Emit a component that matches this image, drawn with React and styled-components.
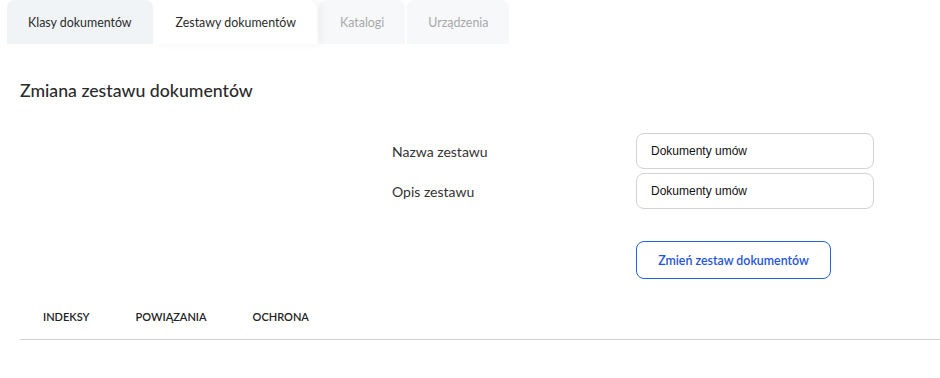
import React, { useState } from 'react'
import styled, { createGlobalStyle } from 'styled-components'

const GlobalStyle = createGlobalStyle`
  body {
    margin: 0;
    background: #fff;
    font-family: Lato, "Noto Sans", sans-serif;
    color: #2b2b2b;
  }
`

const Page = styled.div`
  width: 940px;
`

const TabBar = styled.div`
  display: flex;
  gap: 2px;
  padding-left: 7px;
  height: 44px;
`

const Tab = styled.button`
  border: none;
  border-radius: 8px 8px 0 0;
  padding: 0 21px;
  font-family: inherit;
  font-size: 12.4px;
  background: ${p => (p.active ? '#fff' : p.disabled ? '#f7f8fa' : '#f1f4f7')};
  color: ${p => (p.disabled ? '#a8a8a8' : '#2b2b2b')};
  box-shadow: ${p => (p.active ? '4px 0 8px rgba(0,0,0,0.05)' : 'none')};
  position: relative;
  z-index: ${p => (p.active ? 1 : 0)};
  cursor: ${p => (p.disabled ? 'default' : 'pointer')};
`

const Content = styled.div`
  padding: 36px 0 0 20px;
`

const Title = styled.h2`
  margin: 0;
  font-size: 17.7px;
  line-height: 22px;
  font-weight: 500;
  color: #2b2b2b;
`

const Form = styled.div`
  display: grid;
  grid-template-columns: 244px 238px;
  row-gap: 4px;
  margin: 31px 0 0 372px;
`

const Label = styled.label`
  display: flex;
  align-items: center;
  font-size: 14px;
  color: #333;
`

const Input = styled.input`
  box-sizing: border-box;
  height: 36px;
  border: 1px solid #d2d2d2;
  border-radius: 8px;
  padding: 0 14px;
  font-family: "Liberation Sans", Arial, sans-serif;
  font-size: 12px;
  color: #111;
  outline: none;
`

const Actions = styled.div`
  grid-column: 2;
  margin-top: 28px;
`

const Button = styled.button`
  box-sizing: border-box;
  height: 38px;
  width: 195px;
  border: 1px solid #1f63e2;
  border-radius: 8px;
  background: #fff;
  color: #1f55d6;
  font-family: inherit;
  font-size: 12.4px;
  font-weight: 600;
  cursor: pointer;
`

const SubTabs = styled.div`
  display: flex;
  margin-top: 15px;
  height: 45px;
  border-bottom: 1px solid #cfcfcf;
`

const SubTab = styled.button`
  border: none;
  background: none;
  padding: 0 23px;
  font-family: inherit;
  font-size: 11px;
  font-weight: 600;
  text-transform: uppercase;
  color: #222;
  cursor: pointer;
`

const tabs = [
  { name: 'Klasy dokumentów' },
  { name: 'Zestawy dokumentów', active: true },
  { name: 'Katalogi', disabled: true },
  { name: 'Urządzenia', disabled: true }
]

const App = () => {
  const [name, setName] = useState('Dokumenty umów')
  const [desc, setDesc] = useState('Dokumenty umów')

  return (
    <Page>
      <GlobalStyle />
      <TabBar>
        {tabs.map(t => (
          <Tab key={t.name} active={t.active} disabled={t.disabled}>{t.name}</Tab>
        ))}
      </TabBar>
      <Content>
        <Title>Zmiana zestawu dokumentów</Title>
        <Form>
          <Label>Nazwa zestawu</Label>
          <Input value={name} onChange={e => setName(e.target.value)} />
          <Label>Opis zestawu</Label>
          <Input value={desc} onChange={e => setDesc(e.target.value)} />
          <Actions>
            <Button>Zmień zestaw dokumentów</Button>
          </Actions>
        </Form>
        <SubTabs>
          <SubTab>Indeksy</SubTab>
          <SubTab>Powiązania</SubTab>
          <SubTab>Ochrona</SubTab>
        </SubTabs>
      </Content>
    </Page>
  )
}

export default App
